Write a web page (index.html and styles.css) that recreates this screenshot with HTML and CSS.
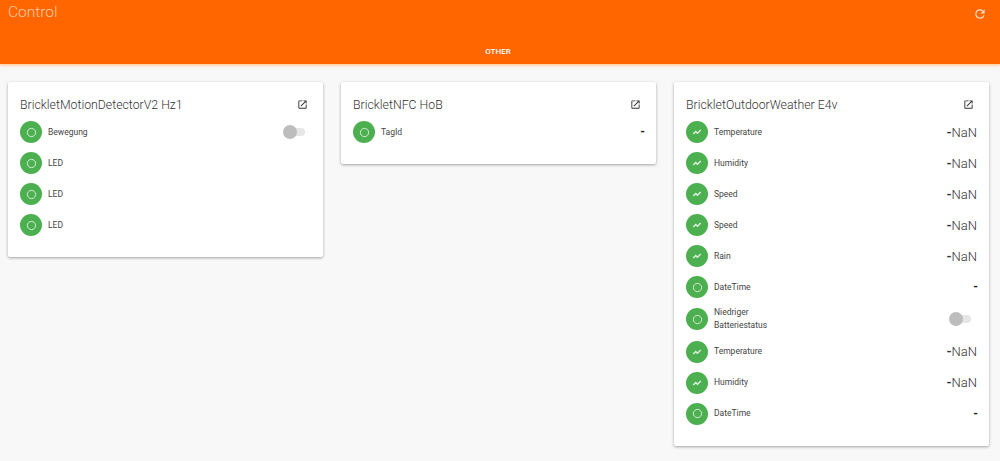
FILE: index.html
```html
<!DOCTYPE html>
<html lang="en">
<head>
    <meta charset="UTF-8">
    <title>Control</title>
    <link rel="stylesheet" href="styles.css">
</head>
<body>
    <svg class="icon-defs" width="0" height="0">
        <symbol id="i-state" viewBox="0 0 24 24"><circle cx="12" cy="12" r="9" fill="none" stroke="currentColor" stroke-width="2"/></symbol>
        <symbol id="i-chart" viewBox="0 0 24 24"><path d="M3 17l6-6 4 4 8-8" fill="none" stroke="currentColor" stroke-width="3.4"/></symbol>
        <symbol id="i-open" viewBox="0 0 24 24"><path d="M19 19H5V5h7V3H5a2 2 0 0 0-2 2v14a2 2 0 0 0 2 2h14a2 2 0 0 0 2-2v-7h-2v7zM14 3v2h3.59l-9.83 9.83 1.41 1.41L19 6.41V10h2V3h-7z"/></symbol>
    </svg>

    <header class="topbar">
        <div class="topbar-row">
            <span class="topbar-title">Control</span>
            <svg class="refresh" viewBox="0 0 24 24"><path d="M17.65 6.35A7.95 7.95 0 0 0 12 4a8 8 0 1 0 7.73 10h-2.08A6 6 0 1 1 12 6c1.66 0 3.14.69 4.22 1.78L13 11h7V4l-2.35 2.35z"/></svg>
        </div>
        <div class="tab">OTHER</div>
    </header>

    <main class="cards">
        <section class="card">
            <div class="card-head">
                <h2>BrickletMotionDetectorV2 Hz1</h2>
                <svg class="open"><use href="#i-open"/></svg>
            </div>
            <div class="row">
                <span class="badge"><svg><use href="#i-state"/></svg></span>
                <span class="name">Bewegung</span>
                <span class="toggle"></span>
            </div>
            <div class="row">
                <span class="badge"><svg><use href="#i-state"/></svg></span>
                <span class="name">LED</span>
            </div>
            <div class="row">
                <span class="badge"><svg><use href="#i-state"/></svg></span>
                <span class="name">LED</span>
            </div>
            <div class="row">
                <span class="badge"><svg><use href="#i-state"/></svg></span>
                <span class="name">LED</span>
            </div>
        </section>

        <section class="card">
            <div class="card-head">
                <h2>BrickletNFC HoB</h2>
                <svg class="open"><use href="#i-open"/></svg>
            </div>
            <div class="row">
                <span class="badge"><svg><use href="#i-state"/></svg></span>
                <span class="name">TagId</span>
                <span class="dash">-</span>
            </div>
        </section>

        <section class="card">
            <div class="card-head">
                <h2>BrickletOutdoorWeather E4v</h2>
                <svg class="open"><use href="#i-open"/></svg>
            </div>
            <div class="row">
                <span class="badge"><svg class="chart"><use href="#i-chart"/></svg></span>
                <span class="name">Temperature</span>
                <span class="value"><b>-</b>NaN</span>
            </div>
            <div class="row">
                <span class="badge"><svg class="chart"><use href="#i-chart"/></svg></span>
                <span class="name">Humidity</span>
                <span class="value"><b>-</b>NaN</span>
            </div>
            <div class="row">
                <span class="badge"><svg class="chart"><use href="#i-chart"/></svg></span>
                <span class="name">Speed</span>
                <span class="value"><b>-</b>NaN</span>
            </div>
            <div class="row">
                <span class="badge"><svg class="chart"><use href="#i-chart"/></svg></span>
                <span class="name">Speed</span>
                <span class="value"><b>-</b>NaN</span>
            </div>
            <div class="row">
                <span class="badge"><svg class="chart"><use href="#i-chart"/></svg></span>
                <span class="name">Rain</span>
                <span class="value"><b>-</b>NaN</span>
            </div>
            <div class="row">
                <span class="badge"><svg><use href="#i-state"/></svg></span>
                <span class="name">DateTime</span>
                <span class="dash">-</span>
            </div>
            <div class="row row-tall">
                <span class="badge"><svg><use href="#i-state"/></svg></span>
                <span class="name">Niedriger<br>Batteriestatus</span>
                <span class="toggle"></span>
            </div>
            <div class="row">
                <span class="badge"><svg class="chart"><use href="#i-chart"/></svg></span>
                <span class="name">Temperature</span>
                <span class="value"><b>-</b>NaN</span>
            </div>
            <div class="row">
                <span class="badge"><svg class="chart"><use href="#i-chart"/></svg></span>
                <span class="name">Humidity</span>
                <span class="value"><b>-</b>NaN</span>
            </div>
            <div class="row">
                <span class="badge"><svg><use href="#i-state"/></svg></span>
                <span class="name">DateTime</span>
                <span class="dash">-</span>
            </div>
        </section>
    </main>
</body>
</html>
```

FILE: styles.css
```css
html, body {
    height: 100%;
}

body {
    margin: 0;
    overflow: hidden;
    background-color: #f8f8f8;
    font-family: Roboto, "Liberation Sans", sans-serif;
    color: #333;
}

.icon-defs {
    position: absolute;
}

/* Top bar */
.topbar {
    height: 64px;
    background-color: #ff6600;
    box-shadow: 0 2px 2px rgba(255, 205, 150, 0.8);
    color: #fff;
}

.topbar-row {
    display: flex;
    justify-content: space-between;
    align-items: flex-start;
    padding: 3px 13px 0 8px;
    height: 39px;
}

.topbar-title {
    font-size: 15.5px;
    font-weight: 300;
    line-height: 19px;
    color: rgba(255, 255, 255, 0.65);
}

.refresh {
    width: 14px;
    height: 14px;
    margin-top: 4px;
    fill: rgba(255, 255, 255, 0.8);
}

.tab {
    text-align: center;
    font-size: 8px;
    font-weight: 500;
    line-height: 20px;
    margin-right: 4px;
}

/* Cards */
.cards {
    display: grid;
    grid-template-columns: repeat(3, 315px);
    gap: 18px;
    align-items: start;
    padding: 18px 8px 0;
}

.card {
    background: white;
    padding: 12px 12px 16.5px;
    border-radius: 2px;
    box-shadow: 0 1px 3px rgba(0, 0, 0, 0.35);
}

.card-head {
    display: flex;
    justify-content: space-between;
    align-items: flex-start;
    height: 22.7px;
}

.card-head h2 {
    margin: 0;
    padding-top: 3px;
    font-size: 12.3px;
    font-weight: 300;
    line-height: 17px;
    color: #333;
}

.open {
    width: 11px;
    height: 11px;
    margin: 5px 3px 0 0;
    fill: #333;
}

.row {
    display: flex;
    align-items: center;
    height: 31px;
}

.row-tall {
    height: 33.5px;
}

.badge {
    display: flex;
    flex: none;
    align-items: center;
    justify-content: center;
    width: 22px;
    height: 22px;
    border-radius: 50%;
    background-color: #4caf50;
    color: #dff0df;
}

.badge svg {
    width: 11px;
    height: 11px;
}

.badge svg.chart {
    width: 10px;
    height: 10px;
}

.name {
    flex: 1;
    margin-left: 6px;
    font-size: 8.5px;
    line-height: 13px;
    color: #444;
}

.value {
    font-size: 13px;
    font-weight: 300;
    color: #333;
}

.value b {
    font-weight: 700;
}

.dash {
    margin-right: -1px;
    font-size: 12px;
    font-weight: 700;
    color: #222;
}

.toggle {
    position: relative;
    width: 19px;
    height: 8px;
    margin-right: 6px;
    border-radius: 4px;
    background-color: #e6e6e6;
}

/* knob sits over the track */
.toggle::after {
    content: "";
    position: absolute;
    top: -3px;
    left: -3px;
    width: 14px;
    height: 14px;
    border-radius: 50%;
    background-color: #bdbdbd;
}
```
